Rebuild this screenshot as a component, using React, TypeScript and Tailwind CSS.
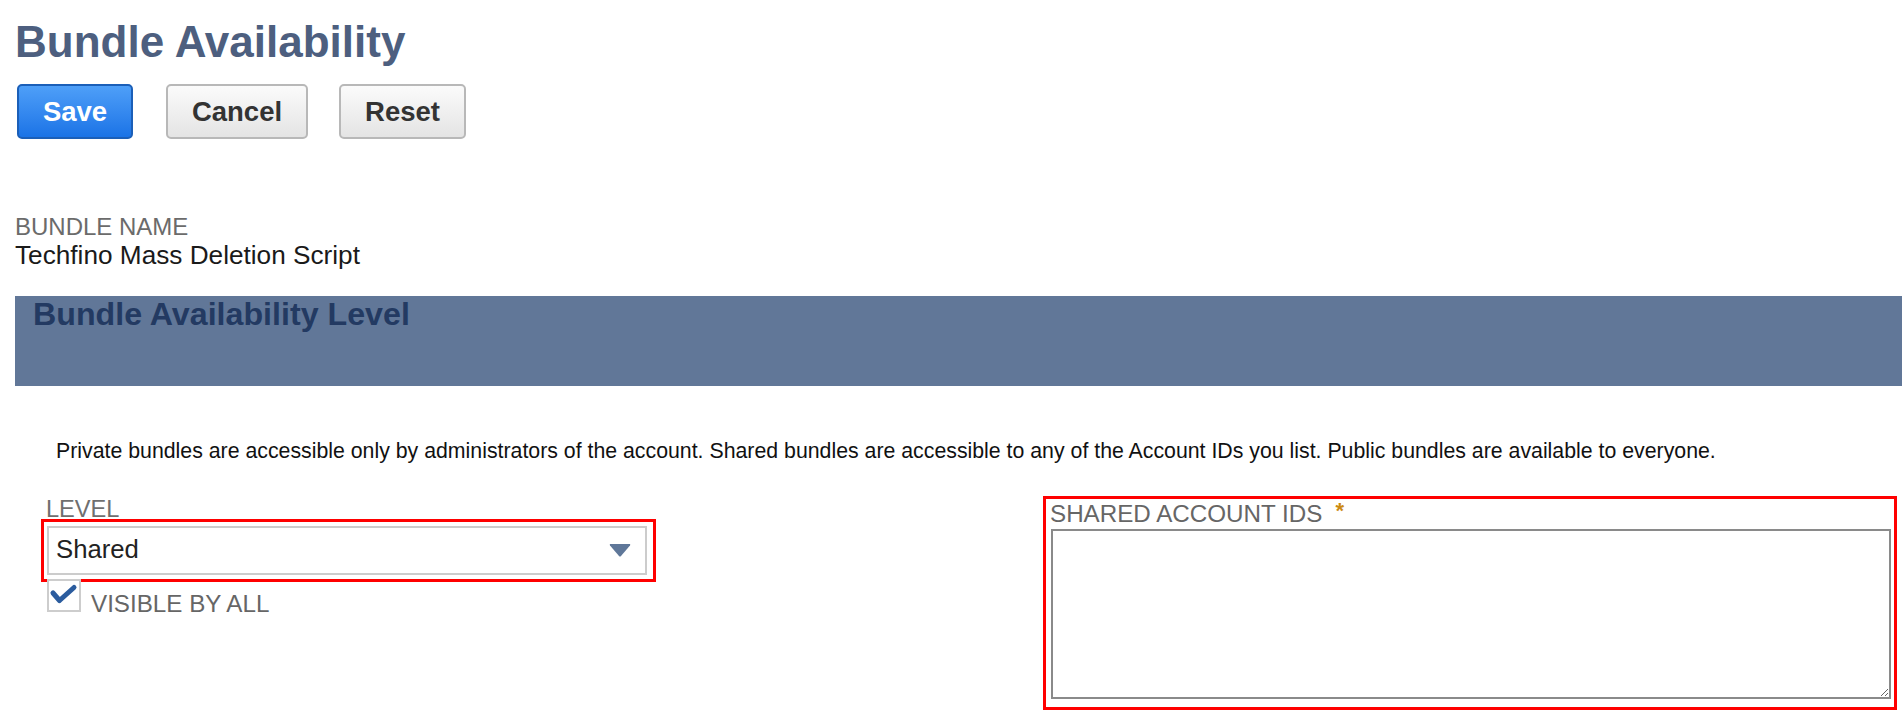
import React from "react";

export default function App() {
  return (
    <div className="w-[1902px] h-[722px] overflow-hidden bg-white font-['Liberation_Sans',Arial,sans-serif]">
      <div className="pl-[15px]">
        <h1 className="pt-[20px] text-[44px] leading-none font-bold text-[#4d5f7f]">
          Bundle Availability
        </h1>

        <div className="mt-[20px] ml-[2px] flex">
          <button className="w-[116px] h-[55px] rounded-[5px] border-2 border-[#1b5fb8] bg-gradient-to-b from-[#4e9ff8] to-[#1a73e6] text-white font-bold text-[27.5px] leading-none flex items-center justify-center">
            Save
          </button>
          <button className="ml-[33px] w-[142px] h-[55px] rounded-[5px] border-2 border-[#b8b8b8] bg-gradient-to-b from-[#fbfbfb] to-[#e4e4e4] text-[#333] font-bold text-[27.5px] leading-none flex items-center justify-center">
            Cancel
          </button>
          <button className="ml-[31px] w-[127px] h-[55px] rounded-[5px] border-2 border-[#b8b8b8] bg-gradient-to-b from-[#fbfbfb] to-[#e4e4e4] text-[#333] font-bold text-[27.5px] leading-none flex items-center justify-center">
            Reset
          </button>
        </div>

        <div className="mt-[76px] text-[24px] leading-none text-[#6b6b6b]">BUNDLE NAME</div>
        <div className="mt-[3px] text-[26.2px] leading-none text-[#1a1a1a]">
          Techfino Mass Deletion Script
        </div>

        <div className="mt-[28px] h-[90px] bg-[#617798] pl-[18px] pt-[2px]">
          <h2 className="text-[32.2px] leading-none font-bold text-[#233a62]">
            Bundle Availability Level
          </h2>
        </div>

        <p className="mt-[55px] ml-[41px] text-[21.3px] leading-none text-[#111]">
          Private bundles are accessible only by administrators of the account. Shared bundles are accessible to any of the Account IDs you list. Public bundles are available to everyone.
        </p>

        <div className="mt-[33px] flex items-start">
          {/* Left column */}
          <div className="ml-[26px] w-[615px] pt-[4px]">
            <div className="ml-[5px] text-[23.6px] leading-[19px] text-[#6f6f6f]">LEVEL</div>
            <div className="border-[3px] border-[#ff0000] pl-[3px] pt-[4px] pr-[6px] pb-[4px]">
              <div className="w-[600px] h-[49px] border-2 border-[#cccccc] bg-white flex items-center pl-[7px] pr-[14px]">
                <span className="flex-1 text-[25.7px] leading-none text-[#222]">Shared</span>
                <svg width="22" height="14" viewBox="0 0 22 14">
                  <path d="M1 1 H21 Q21.5 1.5 21 2.5 L12 13 Q11 14 10 13 L1 2.5 Q0.5 1.5 1 1 Z" fill="#5f7799" />
                </svg>
              </div>
            </div>
            <div className="ml-[6px] mt-[-3px] flex items-end">
              <div className="w-[34px] h-[33px] border-2 border-[#cdcdcd] bg-white relative">
                <svg className="absolute left-0 top-0" width="30" height="29" viewBox="0 0 30 29">
                  <path d="M4 12 L10.5 19.5 L25 6.5" fill="none" stroke="#2b5c9e" strokeWidth="5" strokeLinecap="round" strokeLinejoin="round" />
                </svg>
              </div>
              <span className="ml-[10px] text-[24.2px] leading-[16px] text-[#666]">VISIBLE BY ALL</span>
            </div>
          </div>

          {/* Right column */}
          <div className="ml-[387px] w-[854px] h-[214px] border-[3px] border-[#ff0000] pt-[3px] pl-[5px] pr-[3px]">
            <div className="ml-[-1px] flex items-start text-[24.2px] leading-[24px] text-[#666]">
              <span>SHARED ACCOUNT IDS</span>
              <span className="ml-[13px] text-[22px] font-bold text-[#cc8a12] leading-[18px]">*</span>
            </div>
            <textarea className="mt-[3px] block w-[840px] h-[170px] border-2 border-[#8a8a8a] bg-white outline-none" />
          </div>
        </div>
      </div>
    </div>
  );
}
